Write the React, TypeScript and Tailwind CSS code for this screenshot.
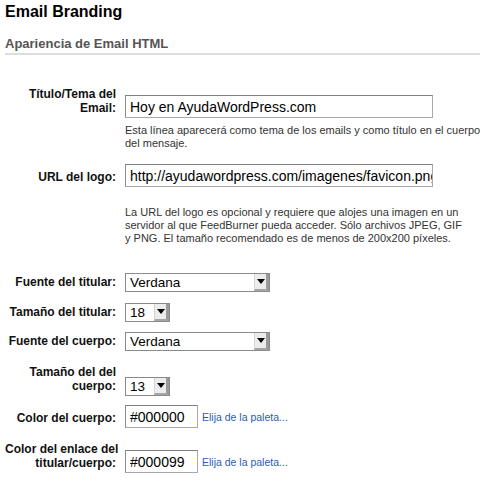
import React from "react";

const font = { fontFamily: '"Liberation Sans", Arial, sans-serif' };

function Label({ children }: { children: React.ReactNode }) {
    return (
        <div className="w-[111px] shrink-0 text-right text-[12px] leading-[14px] font-bold text-[#111] pb-[3px] whitespace-nowrap">
            {children}
        </div>
    );
}

function TextBox({ value, width }: { value: string; width: string }) {
    return (
        <input
            readOnly
            defaultValue={value}
            className={`${width} h-[23px] border border-[#a8a8a8] border-t-[#808080] border-l-[#8c8c8c] bg-white pl-[4px] text-[14px] text-black outline-none`}
            style={font}
        />
    );
}

function FakeSelect({ value, width }: { value: string; width: string }) {
    return (
        <div className={`${width} h-[19px] flex border border-[#8a8a8a] bg-white`}>
            <div className="flex-1 pl-[4px] text-[13.5px] leading-[18px] text-black">{value}</div>
            <div className="w-[15px] h-full flex items-center justify-center bg-[#ececec] border-r-[3px] border-b-[2px] border-r-[#9a9a9a] border-b-[#a5a5a5] border-l border-l-[#d6d6d6]">
                <svg width="8" height="5" viewBox="0 0 8 5">
                    <path d="M0 0 H8 L4 5 Z" fill="#000" />
                </svg>
            </div>
        </div>
    );
}

function PaletteLink() {
    return (
        <a className="text-[10.5px] leading-[13px] text-[#2a5db0] pb-[4px] cursor-pointer">Elija de la paleta...</a>
    );
}

export default function App() {
    return (
        <div className="w-[489px] h-[485px] bg-white px-[5px] overflow-hidden" style={font}>
            <h1 className="pt-[2px] text-[16px] leading-[20px] font-bold text-black">Email Branding</h1>
            <h2 className="mt-[14px] text-[13px] leading-[16px] font-bold text-[#555] pb-[1px] border-b-2 border-[#dddddd] w-[475px]">
                Apariencia de Email HTML
            </h2>

            {/* título */}
            <div className="mt-[32px] flex items-end gap-[9px]">
                <Label>
                    Título/Tema del
                    <br />
                    Email:
                </Label>
                <TextBox value="Hoy en AyudaWordPress.com" width="w-[308px]" />
            </div>
            <p className="ml-[120px] mt-[6px] text-[11px] leading-[13px] text-[#333] whitespace-nowrap">
                Esta línea aparecerá como tema de los emails y como título en el cuerpo
                <br />
                del mensaje.
            </p>

            {/* logo */}
            <div className="mt-[14px] flex items-end gap-[9px]">
                <Label>URL del logo:</Label>
                <TextBox value="http://ayudawordpress.com/imagenes/favicon.png" width="w-[308px]" />
            </div>
            <p className="ml-[120px] mt-[19px] text-[11px] leading-[13px] text-[#333] whitespace-nowrap">
                La URL del logo es opcional y requiere que alojes una imagen en un
                <br />
                servidor al que FeedBurner pueda acceder. Sólo archivos JPEG, GIF
                <br />
                y PNG. El tamaño recomendado es de menos de 200x200 píxeles.
            </p>

            <div className="mt-[28px] flex items-end gap-[9px]">
                <Label>Fuente del titular:</Label>
                <FakeSelect value="Verdana" width="w-[145px]" />
            </div>
            <div className="mt-[11px] flex items-end gap-[9px]">
                <Label>Tamaño del titular:</Label>
                <FakeSelect value="18" width="w-[45px]" />
            </div>
            <div className="mt-[10px] flex items-end gap-[9px]">
                <Label>Fuente del cuerpo:</Label>
                <FakeSelect value="Verdana" width="w-[145px]" />
            </div>
            <div className="mt-[14px] flex items-end gap-[9px]">
                <Label>
                    Tamaño del del
                    <br />
                    cuerpo:
                </Label>
                <FakeSelect value="13" width="w-[45px]" />
            </div>

            <div className="mt-[9px] flex items-end gap-[9px]">
                <Label>Color del cuerpo:</Label>
                <div className="flex items-end gap-[4px]">
                    <TextBox value="#000000" width="w-[73px]" />
                    <PaletteLink />
                </div>
            </div>
            <div className="mt-[14px] flex items-end gap-[9px]">
                <Label>
                    Color del enlace del
                    <br />
                    titular/cuerpo:
                </Label>
                <div className="flex items-end gap-[4px]">
                    <TextBox value="#000099" width="w-[73px]" />
                    <PaletteLink />
                </div>
            </div>
        </div>
    );
}
